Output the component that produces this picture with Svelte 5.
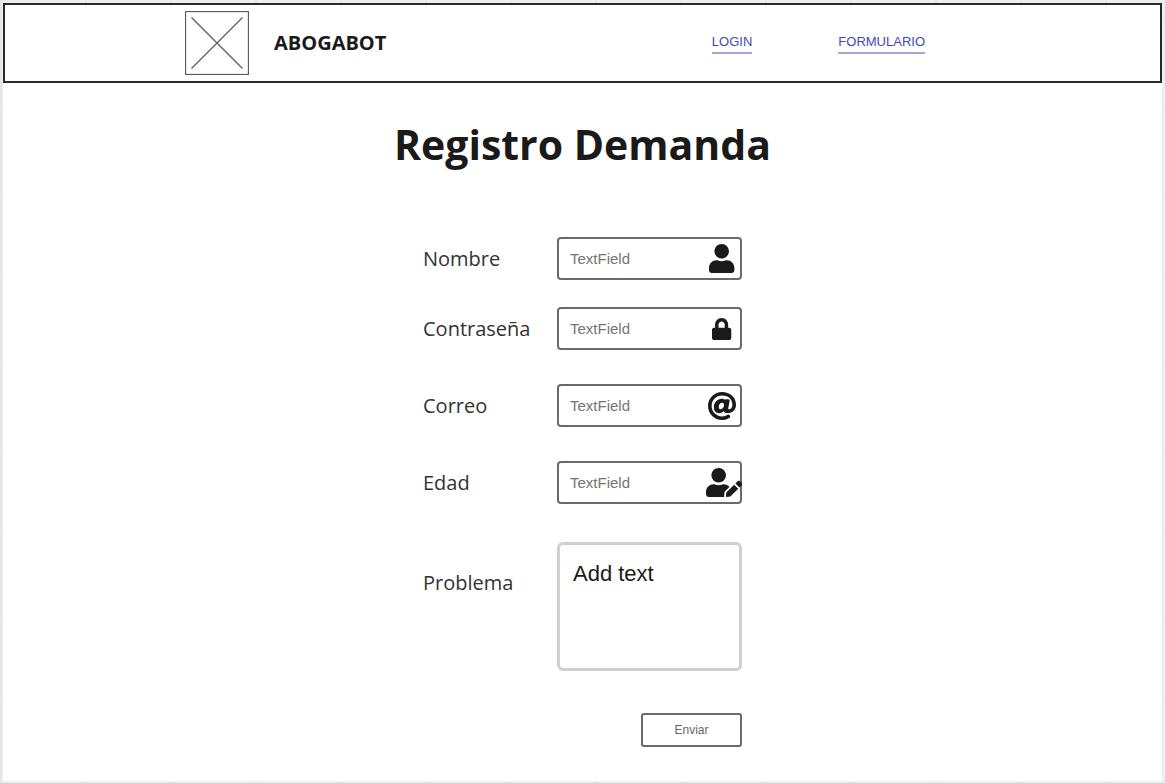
<script>
  const userPath =
    'M224 256c70.7 0 128-57.3 128-128S294.7 0 224 0 96 57.3 96 128s57.3 128 128 128zm89.6 32h-16.7c-22.2 10.2-46.9 16-72.9 16s-50.6-5.8-72.9-16h-16.7C60.2 288 0 348.2 0 422.4V464c0 26.5 21.5 48 48 48h352c26.5 0 48-21.5 48-48v-41.6c0-74.2-60.2-134.4-134.4-134.4z';
  const lockPath =
    'M400 224h-24v-72C376 68.2 307.8 0 224 0S72 68.2 72 152v72H48c-26.5 0-48 21.5-48 48v192c0 26.5 21.5 48 48 48h352c26.5 0 48-21.5 48-48V272c0-26.5-21.5-48-48-48zm-104 0H152v-72c0-39.7 32.3-72 72-72s72 32.3 72 72v72z';
  const atPath =
    'M256 8C118.941 8 8 118.919 8 256c0 137.059 110.919 248 248 248 48.154 0 95.342-14.14 135.408-40.223 12.005-7.815 14.625-24.288 5.552-35.372l-10.177-12.433c-7.671-9.371-21.179-11.667-31.373-5.129C325.92 429.757 291.314 440 256 440c-101.458 0-184-82.542-184-184S154.542 72 256 72c100.139 0 184 57.619 184 160 0 38.786-21.093 79.742-58.17 83.693-17.349-.454-16.91-12.857-13.476-30.024l23.433-121.11C394.653 149.75 383.308 136 368.225 136h-44.981a13.518 13.518 0 0 0-13.432 11.993l-.01.092c-14.697-17.901-40.448-21.775-59.971-21.775-74.58 0-137.831 62.234-137.831 151.46 0 65.303 36.785 105.87 96 105.87 26.984 0 57.369-15.637 74.991-38.333 9.522 34.104 40.613 34.104 70.71 34.104C462.609 379.41 504 307.798 504 232 504 95.653 394.023 8 256 8zm-21.68 304.43c-22.249 0-36.07-15.623-36.07-40.771 0-44.993 30.779-72.729 58.63-72.729 22.292 0 35.601 15.241 35.601 40.77 0 45.061-33.875 72.73-58.161 72.73z';
  const editPath =
    'M224 256c70.7 0 128-57.3 128-128S294.7 0 224 0 96 57.3 96 128s57.3 128 128 128zm89.6 32h-16.7c-22.2 10.2-46.9 16-72.9 16s-50.6-5.8-72.9-16h-16.7C60.2 288 0 348.2 0 422.4V464c0 26.5 21.5 48 48 48h274.9c-2.4-6.8-3.4-14-2.6-21.3l6.8-60.9 1.2-11.1 7.9-7.9 77.3-77.3c-24.5-27.7-60-45.5-99.9-45.5zm45.3 145.3l-6.8 61c-1.1 10.2 7.5 18.8 17.6 17.6l60.9-6.8 137.9-137.9-71.7-71.7-137.9 137.8zM633 268.9L595.1 231c-9.3-9.3-24.5-9.3-33.8 0l-37.8 37.8-4.1 4.1 71.8 71.7 41.8-41.8c9.3-9.4 9.3-24.5 0-33.9z';

  const fields = [
    { id: 'nombre', label: 'Nombre', type: 'text', box: '0 0 448 512', path: userPath },
    { id: 'contrasena', label: 'Contraseña', type: 'password', box: '0 0 448 512', path: lockPath },
    { id: 'correo', label: 'Correo', type: 'email', box: '8 8 496 496', path: atPath },
    { id: 'edad', label: 'Edad', type: 'text', box: '0 0 640 512', path: editPath }
  ];
</script>

<div class="page">
  <header>
    <div class="brand">
      <svg class="logo" viewBox="0 0 64 64" aria-hidden="true">
        <rect x="0.5" y="0.5" width="63" height="63" />
        <path d="M6.500 6.500L57.500 57.500M57.500 6.500L6.500 57.500" />
      </svg>
      <span>ABOGABOT</span>
    </div>
    <nav>
      <a href="#login">LOGIN</a>
      <a href="#formulario">FORMULARIO</a>
    </nav>
  </header>

  <main>
    <h1>Registro Demanda</h1>
    <form>
      {#each fields as field}
        <div class="row {field.id}">
          <label for={field.id}>{field.label}</label>
          <div class="control">
            <input id={field.id} type={field.type} placeholder="TextField" />
            <svg viewBox={field.box} aria-hidden="true"><path d={field.path} /></svg>
          </div>
        </div>
      {/each}
      <div class="row problema">
        <label for="problema">Problema</label>
        <textarea id="problema" placeholder="Add text"></textarea>
      </div>
      <button type="button">Enviar</button>
    </form>
  </main>
</div>

<style>
  :global(body) {
    background-color: #eeeeee;
    background-image: linear-gradient(90deg, #e6e6e6 2px, transparent 2px),
      linear-gradient(#e6e6e6 1px, transparent 1px);
    background-size: 85px 85px;
    background-position: 0 23px;
  }
  .page {
    box-sizing: border-box;
    margin: 3px 3px 2px;
    padding-bottom: 34px;
    background: #fff;
    color: #1a1a1a;
    font-family: 'Open Sans', sans-serif;
  }
  header {
    display: flex;
    align-items: center;
    justify-content: space-between;
    box-sizing: border-box;
    min-height: 80px;
    padding: 0 235px 0 180px;
    border: 2px solid #2a2a2a;
  }
  .brand {
    display: flex;
    align-items: center;
    gap: 25px;
    font-size: 20px;
    font-weight: 700;
    line-height: 28px;
  }
  .logo {
    width: 64px;
    height: 64px;
    fill: none;
    stroke: #5e5e5e;
    stroke-width: 1.3;
  }
  nav {
    display: flex;
    gap: 86px;
  }
  nav a {
    border-bottom: 2px solid #a3a8dc;
    color: #3f48b5;
    font: 13px/20px 'Liberation Sans', Arial, sans-serif;
    text-decoration: none;
  }
  h1 {
    margin: 0;
    padding: 33px 0 65px;
    font-size: 41px;
    font-weight: 700;
    line-height: 56px;
    text-align: center;
  }
  form {
    display: flex;
    flex-direction: column;
    gap: 34px;
    width: 319px;
    margin: 0 auto;
  }
  .row {
    display: grid;
    grid-template-columns: 134px 1fr;
    align-items: center;
  }
  .contrasena {
    margin-top: -7px;
  }
  label {
    color: #333;
    font-size: 20px;
    font-weight: 400;
    line-height: 28px;
  }
  .control {
    display: grid;
    grid-template-columns: 1fr 40px;
    align-items: center;
  }
  input,
  svg {
    grid-row: 1;
  }
  input {
    grid-column: 1 / 3;
    box-sizing: border-box;
    width: 100%;
    min-width: 0;
    height: 43px;
    padding: 0 42px 0 11px;
    border: 2px solid #6a6a6a;
    border-radius: 4px;
    background: #fff;
    color: #1a1a1a;
    font: 15px/20px 'Liberation Sans', Arial, sans-serif;
  }
  input::placeholder {
    color: #757575;
    opacity: 1;
  }
  .control svg {
    grid-column: 2;
    justify-self: center;
    z-index: 1;
    height: 29px;
    fill: #1a1a1a;
    pointer-events: none;
  }
  .contrasena .control svg {
    height: 22px;
  }
  .correo .control svg {
    height: 28px;
  }
  .edad .control svg {
    justify-self: end;
  }
  .problema {
    align-items: start;
    margin-top: 4px;
  }
  .problema label {
    padding-top: 27px;
  }
  textarea {
    box-sizing: border-box;
    width: 100%;
    height: 129px;
    padding: 16px 13px;
    border: 3px solid #d0d0d0;
    border-radius: 6px;
    background: #fff;
    color: #1a1a1a;
    font: 22px/26px 'Liberation Sans', Arial, sans-serif;
    resize: none;
  }
  textarea::placeholder {
    color: #1a1a1a;
    opacity: 1;
  }
  button {
    align-self: flex-end;
    width: 101px;
    height: 34px;
    margin-top: 8px;
    border: 2px solid #6a6a6a;
    border-radius: 3px;
    background: #fff;
    color: #666;
    font: 12px/16px 'Liberation Sans', Arial, sans-serif;
  }
</style>
